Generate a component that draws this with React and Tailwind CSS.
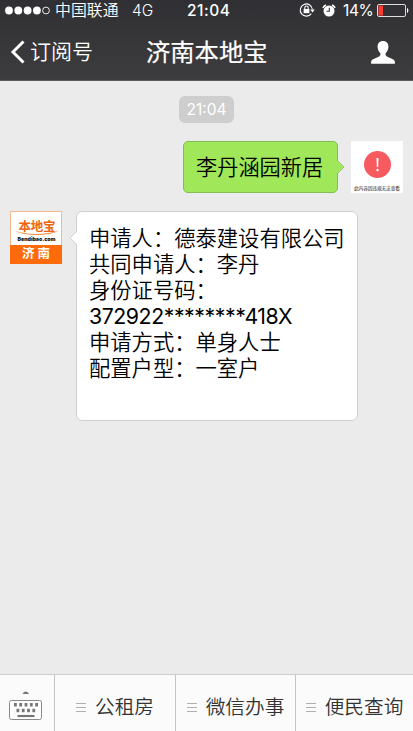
import React from "react";

const messageLines = [
  "申请人：德泰建设有限公司",
  "共同申请人：李丹",
  "身份证号码：",
  "372922********418X",
  "申请方式：单身人士",
  "配置户型：一室户",
];

const StatusBar = () => (
  <div className="flex h-5 items-center text-[15.5px] leading-5">
    <svg className="ml-[5px] shrink-0" width="45" height="10" viewBox="0 0 45 10" fill="#fff">
      <circle cx="4" cy="5.5" r="3.9" />
      <circle cx="13.3" cy="5.5" r="3.9" />
      <circle cx="22.6" cy="5.5" r="3.9" />
      <circle cx="31.9" cy="5.5" r="3.9" />
      <circle cx="41" cy="5.5" r="3.4" fill="none" stroke="#fff" strokeWidth="0.9" />
    </svg>
    <span className="mt-px ml-[5px] w-[77px] whitespace-nowrap text-[15.9px] font-[350]">中国联通</span>
    <span className="mt-px w-[55px] font-[350]">4G</span>
    <span className="mt-px w-[112px] font-medium tracking-[0.5px]">21:04</span>
    <svg width="16" height="16" viewBox="0 0 16 16" fill="none" stroke="#fff" strokeWidth="1.1">
      <path d="M12.3 11.6A6.1 6.1 0 1 1 13.4 7.2" />
      <path d="M11.2 7.6h4.6l-2.3 2.8z" fill="#fff" stroke="none" />
      <rect x="4.6" y="7" width="5.8" height="4.2" fill="#fff" stroke="none" />
      <path d="M5.8 7.2V5.7a1.7 1.7 0 0 1 3.4 0v1.5" />
    </svg>
    <svg className="ml-[7px]" width="14" height="15" viewBox="0 0 14 15">
      <circle cx="7" cy="8" r="5.5" fill="#fff" />
      <path d="M.9 4.8A7 7 0 0 1 4 2M10 2a7 7 0 0 1 3.1 2.8" fill="none" stroke="#fff" strokeWidth="1.6" />
      <path d="M7.3 4.8v3.5H4.5" fill="none" stroke="#343337" strokeWidth="1.1" />
    </svg>
    <span className="mt-px ml-[7px] w-[34px] text-[15.5px] tracking-[-0.4px]">14%</span>
    <svg className="shrink-0" width="33" height="14" viewBox="0 0 33 14">
      <rect x=".5" y="1.5" width="28" height="12" rx="1.5" fill="none" stroke="#ddd" strokeWidth="1" />
      <rect x="1.5" y="2.5" width="4.5" height="10" fill="#fb3b30" />
      <path d="M30 5c1.8.5 1.8 4.5 0 5z" fill="#fff" />
    </svg>
  </div>
);

const NavBar = () => (
  <div className="grid h-[60px] grid-cols-[146px_1fr_43px] items-center">
    <div className="flex items-center">
      <svg className="mt-[3px] ml-[10px]" width="15" height="24" viewBox="0 0 15 24" fill="none" stroke="#fff" strokeWidth="2.9">
        <path d="M13.5 1.5L3 12l10.5 10.5" />
      </svg>
      <span className="mt-[3px] ml-[5px] text-[21px] leading-6 font-[350]">订阅号</span>
    </div>
    <h1 className="mt-[3px] text-[24.3px] leading-6 font-normal [-webkit-text-stroke:0.2px_#fff]">济南本地宝</h1>
    <svg className="mt-[4px]" width="26" height="25" viewBox="0 0 26 25" fill="#fff">
      <path d="M13 1c-3.500 0-5.600 2.600-5.400 6 .1 2.500 1.200 4.700 2.700 6.100.4 1.700 0 2.900-1.600 3.700-2.900 1.300-6.700 2.200-7.500 4.600-.3.900-.2 2.400.2 2.400h23.200c.4 0 .5-1.500.2-2.400-.8-2.400-4.600-3.300-7.500-4.600-1.600-.8-2-2-1.600-3.700 1.500-1.400 2.600-3.600 2.700-6.100.2-3.400-1.900-6-5.400-6z" />
    </svg>
  </div>
);

const UserAvatar = () => (
  <div className="flex h-[52px] w-[52px] flex-col items-center overflow-hidden bg-white pt-[10px]">
    <svg className="shrink-0" width="27" height="27" viewBox="0 0 27 27">
      <circle cx="13.5" cy="13.5" r="13.5" fill="#f75b60" />
      <path d="M12.5 7h2l-.3 9h-1.400z" fill="#fff" />
      <circle cx="13.5" cy="19" r="1.2" fill="#fff" />
    </svg>
    <svg className="mt-[5px] shrink-0" width="52" height="9">
      <text x="3" y="6.6" fontSize="4.7" fill="#222" textLength="46">此内容因违规无法查看</text>
    </svg>
  </div>
);

const AccountAvatar = () => (
  <div className="flex h-[53px] w-[52px] flex-col border border-[#f3b98c] bg-white">
    <svg className="shrink-0" width="50" height="33" viewBox="0 0 50 33">
      <text x="7.5" y="18.5" fontSize="12.5" fontWeight="600" fill="#ee6512" textLength="37">本地宝</text>
      <path d="M3 18.5c12 4.600 32 4.600 45 0-10 6-34 6-45 0z" fill="#f58a3c" />
      <text x="6.5" y="28.5" fontSize="5" fontWeight="900" fill="#111" textLength="38" lengthAdjust="spacingAndGlyphs">Bendibao.com</text>
    </svg>
    <div className="-mx-px -mb-px flex flex-1 items-center justify-center gap-[3px] bg-[#ff6a0b] text-[12.5px] leading-none font-bold text-white">
      <span>济</span>
      <span>南</span>
    </div>
  </div>
);

const KeyboardIcon = () => (
  <svg width="34" height="30" viewBox="0 0 34 30">
    <path d="M13.5 4c.8-1.600 2-2.500 3.300-2.500S19.300 2.400 20 4z" fill="#777" />
    <rect x=".5" y="10.5" width="32" height="19" rx="2" fill="#fff" stroke="#888" />
    <path d="M5 14.8h25" stroke="#777" strokeWidth="3.4" strokeDasharray="2.8 2.5" />
    <path d="M7.5 20.5h19" stroke="#777" strokeWidth="3.4" strokeDasharray="2.8 2.5" />
    <path d="M8.5 26h17" stroke="#777" strokeWidth="2.2" />
  </svg>
);

const MenuItem = ({ label }) => (
  <div className="flex items-center justify-center gap-[9px] border-l border-[#c4c4c6] pt-[8px]">
    <svg className="-mt-px shrink-0" width="10" height="10" viewBox="0 0 10 10" stroke="#b0b0b0" strokeWidth="1">
      <path d="M0 1.5h10M0 5.5h10M0 9.5h10" />
    </svg>
    <span className="text-[19.7px] leading-7 font-[350] whitespace-nowrap text-[#333]">{label}</span>
  </div>
);

export default function App() {
  return (
    <div className="flex h-[731px] w-[413px] flex-col overflow-hidden bg-[#ebebeb] font-['Inter','Noto_Sans_CJK_SC',sans-serif]">
      <header className="h-[81px] shrink-0 border-b border-[#5d5d5f] bg-linear-to-b from-[#303034] to-[#3d3c3e] text-white">
        <StatusBar />
        <NavBar />
      </header>

      <main className="flex-1">
        <div className="flex justify-center pt-[15px]">
          <span className="h-[27px] w-[55px] rounded-[6px] bg-[#cecece] text-center text-[15.5px] leading-[28px] text-white">21:04</span>
        </div>

        <div className="mt-[18px] flex justify-end pr-[10px]">
          <div className="h-[52px] w-[155px] rounded-[5px] border border-[#83bd55] bg-[#a0e75a] pl-[12px] text-[21.2px] leading-[50px] font-[350] whitespace-nowrap text-black">
            李丹涵园新居
          </div>
          <svg className="relative z-10 mt-[19px] mr-[6px] -ml-px shrink-0" width="8" height="14" viewBox="0 0 8 14">
            <path d="M0 .5L6.5 7 0 13.5z" fill="#a0e75a" />
            <path d="M.5.5L7 7 .5 13.5" fill="none" stroke="#83bd55" strokeWidth=".8" />
          </svg>
          <UserAvatar />
        </div>

        <div className="mt-[18px] flex pl-[10px]">
          <AccountAvatar />
          <svg className="relative z-10 mt-[20px] -mr-px ml-[7px] shrink-0" width="8" height="14" viewBox="0 0 8 14">
            <path d="M8 .5L1.5 7 8 13.5z" fill="#fff" />
            <path d="M7.5.5L1 7l6.5 6.5" fill="none" stroke="#ccc" strokeWidth=".8" />
          </svg>
          <div className="h-[210px] w-[282px] rounded-[6px] border border-[#cfcfcf] bg-white pt-[13px] pl-[12px] text-[21.3px] leading-[26.1px] font-[350] text-black">
            {messageLines.map((line) => (
              <p key={line} className={line.includes("*") ? "font-normal tracking-[-0.45px] whitespace-nowrap" : "whitespace-nowrap"}>{line}</p>
            ))}
          </div>
        </div>
      </main>

      <footer className="grid h-[57px] shrink-0 grid-cols-[54px_121px_120px_118px] border-t border-[#cdcdcf] bg-[#fbfbfb]">
        <div className="flex items-center justify-center pt-[3px] pr-[3px]">
          <KeyboardIcon />
        </div>
        <MenuItem label="公租房" />
        <MenuItem label="微信办事" />
        <MenuItem label="便民查询" />
      </footer>
    </div>
  );
}
